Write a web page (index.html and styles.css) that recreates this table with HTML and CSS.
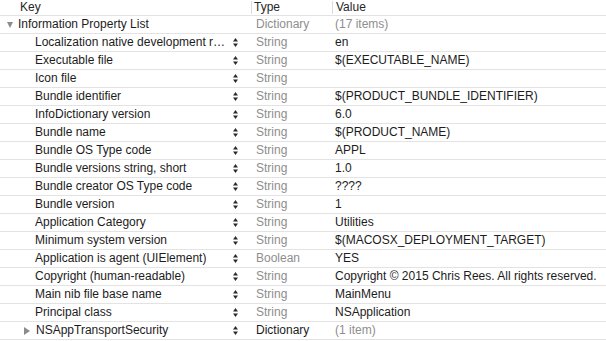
FILE: index.html
```html
<!DOCTYPE html>
<html lang="en">
<head>
  <meta charset="UTF-8" />
  <title>Info.plist</title>
  <link rel="stylesheet" href="styles.css">
</head>
<body>
  <div class="plist">
    <div class="row header">
      <div class="cell key-head">Key</div>
      <div class="cell type-head">Type</div>
      <div class="cell value-head">Value</div>
    </div>

    <div class="row root">
      <div class="cell key">
        <span class="disclosure open"></span>
        <span class="name">Information Property List</span>
      </div>
      <div class="cell type dim">Dictionary</div>
      <div class="cell value dim">(17 items)</div>
    </div>
  </div>

  <script>
    var items = [
      ["Localization native development region", "String", "en"],
      ["Executable file", "String", "$(EXECUTABLE_NAME)"],
      ["Icon file", "String", ""],
      ["Bundle identifier", "String", "$(PRODUCT_BUNDLE_IDENTIFIER)"],
      ["InfoDictionary version", "String", "6.0"],
      ["Bundle name", "String", "$(PRODUCT_NAME)"],
      ["Bundle OS Type code", "String", "APPL"],
      ["Bundle versions string, short", "String", "1.0"],
      ["Bundle creator OS Type code", "String", "????"],
      ["Bundle version", "String", "1"],
      ["Application Category", "String", "Utilities"],
      ["Minimum system version", "String", "$(MACOSX_DEPLOYMENT_TARGET)"],
      ["Application is agent (UIElement)", "Boolean", "YES"],
      ["Copyright (human-readable)", "String", "Copyright \u00a9 2015 Chris Rees. All rights reserved."],
      ["Main nib file base name", "String", "MainMenu"],
      ["Principal class", "String", "NSApplication"]
    ];

    var stepper = '<svg class="stepper" width="7" height="11" viewBox="0 0 7 11">' +
      '<path d="M3.5 1 L6 4.5 L1 4.5 Z" fill="#2b2b2b"/>' +
      '<path d="M3.5 10 L6 6.5 L1 6.5 Z" fill="#2b2b2b"/></svg>';

    var list = document.querySelector(".plist");

    function addRow(html) {
      var row = document.createElement("div");
      row.className = "row";
      row.innerHTML = html;
      list.appendChild(row);
    }

    items.forEach(function (item) {
      addRow(
        '<div class="cell key child"><span class="name">' + item[0] + '</span>' + stepper + '</div>' +
        '<div class="cell type dim">' + item[1] + '</div>' +
        '<div class="cell value">' + item[2] + '</div>'
      );
    });

    addRow(
      '<div class="cell key nested"><span class="disclosure"></span><span class="name">NSAppTransportSecurity</span>' + stepper + '</div>' +
      '<div class="cell type">Dictionary</div>' +
      '<div class="cell value dim">(1 item)</div>'
    );
  </script>
</body>
</html>
```

FILE: styles.css
```css
body {
  margin: 0;
  background: #fff;
  font-family: "Liberation Sans", Arial, sans-serif;
  font-size: 12px;
  color: #1c1c1c;
}

.plist {
  width: 606px;
}

.row {
  display: grid;
  grid-template-columns: 251px 81px 1fr;
  height: 17px;
  border-bottom: 1px solid #e3e3e3;
  align-items: center;
}

.cell {
  white-space: nowrap;
  overflow: hidden;
  line-height: 17px;
}

.header {
  height: 15px;
}

.header .cell {
  line-height: 15px;
  color: #262626;
}

.key-head {
  padding-left: 20px;
}

.type-head,
.value-head {
  border-left: 1px solid #dcdcdc;
  height: 13px;
  line-height: 13px !important;
}

.type-head {
  padding-left: 2px;
}

.value-head {
  padding-left: 3px;
}

.key {
  display: flex;
  align-items: center;
  padding-left: 7px;
}

.key.child {
  padding-left: 35px;
}

.key.nested {
  padding-left: 24px;
}

.name {
  flex: 1;
  overflow: hidden;
  text-overflow: ellipsis;
}

.stepper {
  flex: none;
  margin: 0 12px 0 5px;
}

.disclosure {
  width: 0;
  height: 0;
  margin-right: 6px;
  border-top: 4px solid transparent;
  border-bottom: 4px solid transparent;
  border-left: 6px solid #8c8c8c;
}

.disclosure.open {
  border-left: 3.5px solid transparent;
  border-right: 3.5px solid transparent;
  border-top: 6px solid #8c8c8c;
  border-bottom: 0;
  margin-right: 5px;
}

.type {
  padding-left: 5px;
}

.value {
  padding-left: 3px;
}

.dim {
  color: #8e8e8e;
}
```
